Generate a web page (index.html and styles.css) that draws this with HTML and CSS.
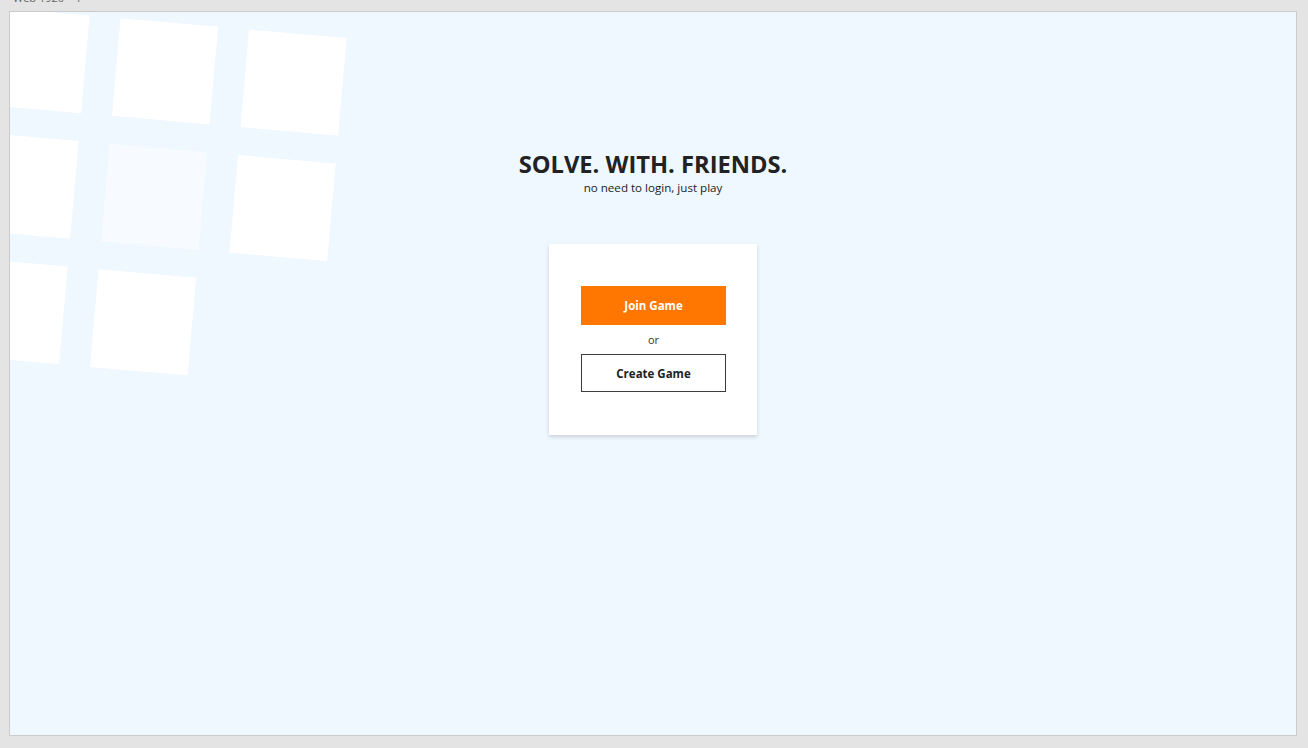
FILE: index.html
```html
<!DOCTYPE html>
<html lang="en">
<head>
<meta charset="utf-8">
<title>Solve. With. Friends.</title>
<link rel="stylesheet" href="styles.css">
</head>
<body>
<div class="label">Web 1920 – 1</div>
<main class="frame">
  <div class="tiles">
    <div class="tile"></div>
    <div class="tile"></div>
    <div class="tile"></div>
    <div class="tile"></div>
    <div class="tile tile-soft"></div>
    <div class="tile"></div>
    <div class="tile"></div>
    <div class="tile"></div>
  </div>
  <section class="content">
    <h1 class="title">SOLVE. WITH. FRIENDS.</h1>
    <p class="subtitle">no need to login, just play</p>
    <div class="card">
      <button class="btn btn-primary">Join Game</button>
      <span class="or">or</span>
      <button class="btn btn-outline">Create Game</button>
    </div>
  </section>
</main>
</body>
</html>
```
FILE: styles.css
```css
* { box-sizing: border-box; }
html, body { margin: 0; padding: 0; }
body {
  background: #e4e4e4;
  width: 1308px;
  height: 748px;
  overflow: hidden;
  font-family: "Open Sans", "Noto Sans", sans-serif;
  color: #222;
}
.label {
  height: 11px;
  margin-left: 13px;
  font-size: 11px;
  line-height: 11px;
  margin-top: -8px;
  margin-bottom: 8px;
  color: #666;
}
.frame {
  position: relative;
  margin-left: 9px;
  width: 1288px;
  height: 725px;
  border: 1px solid #cbcbcb;
  background: #eff7ff;
  overflow: hidden;
}
.tiles {
  position: absolute;
  left: -17.6px;
  top: -5.5px;
  display: grid;
  grid-template-columns: repeat(3, 98px);
  grid-auto-rows: 98px;
  column-gap: 31px;
  row-gap: 28px;
  transform: rotate(5deg);
  transform-origin: 0 0;
}
.tile { background: #ffffff; }
.tile-soft { background: #f7fbff; }
.content {
  position: relative;
  display: flex;
  flex-direction: column;
  align-items: center;
  padding-top: 138px;
}
.title {
  margin: 0;
  font-size: 23.7px;
  line-height: 28px;
  font-weight: 700;
  color: #222;
}
.subtitle {
  margin: 2px 0 0;
  font-size: 11.6px;
  line-height: 15px;
  color: #222;
}
.card {
  margin-top: 49px;
  width: 208px;
  background: #fff;
  box-shadow: 0 2px 4px rgba(0, 0, 0, 0.16);
  padding: 42px 31px 43px 32px;
  display: flex;
  flex-direction: column;
  align-items: stretch;
}
.btn {
  height: 39px;
  font-family: inherit;
  font-size: 11.5px;
  font-weight: 700;
  cursor: pointer;
  border-radius: 0;
}
.btn-primary {
  background: #ff7700;
  color: #fff;
  border: none;
}
.btn-outline {
  background: #fff;
  color: #222;
  border: 1.5px solid #3c3c3c;
  height: 38px;
}
.or {
  text-align: center;
  font-size: 11px;
  line-height: 29px;
  color: #333;
}
```
